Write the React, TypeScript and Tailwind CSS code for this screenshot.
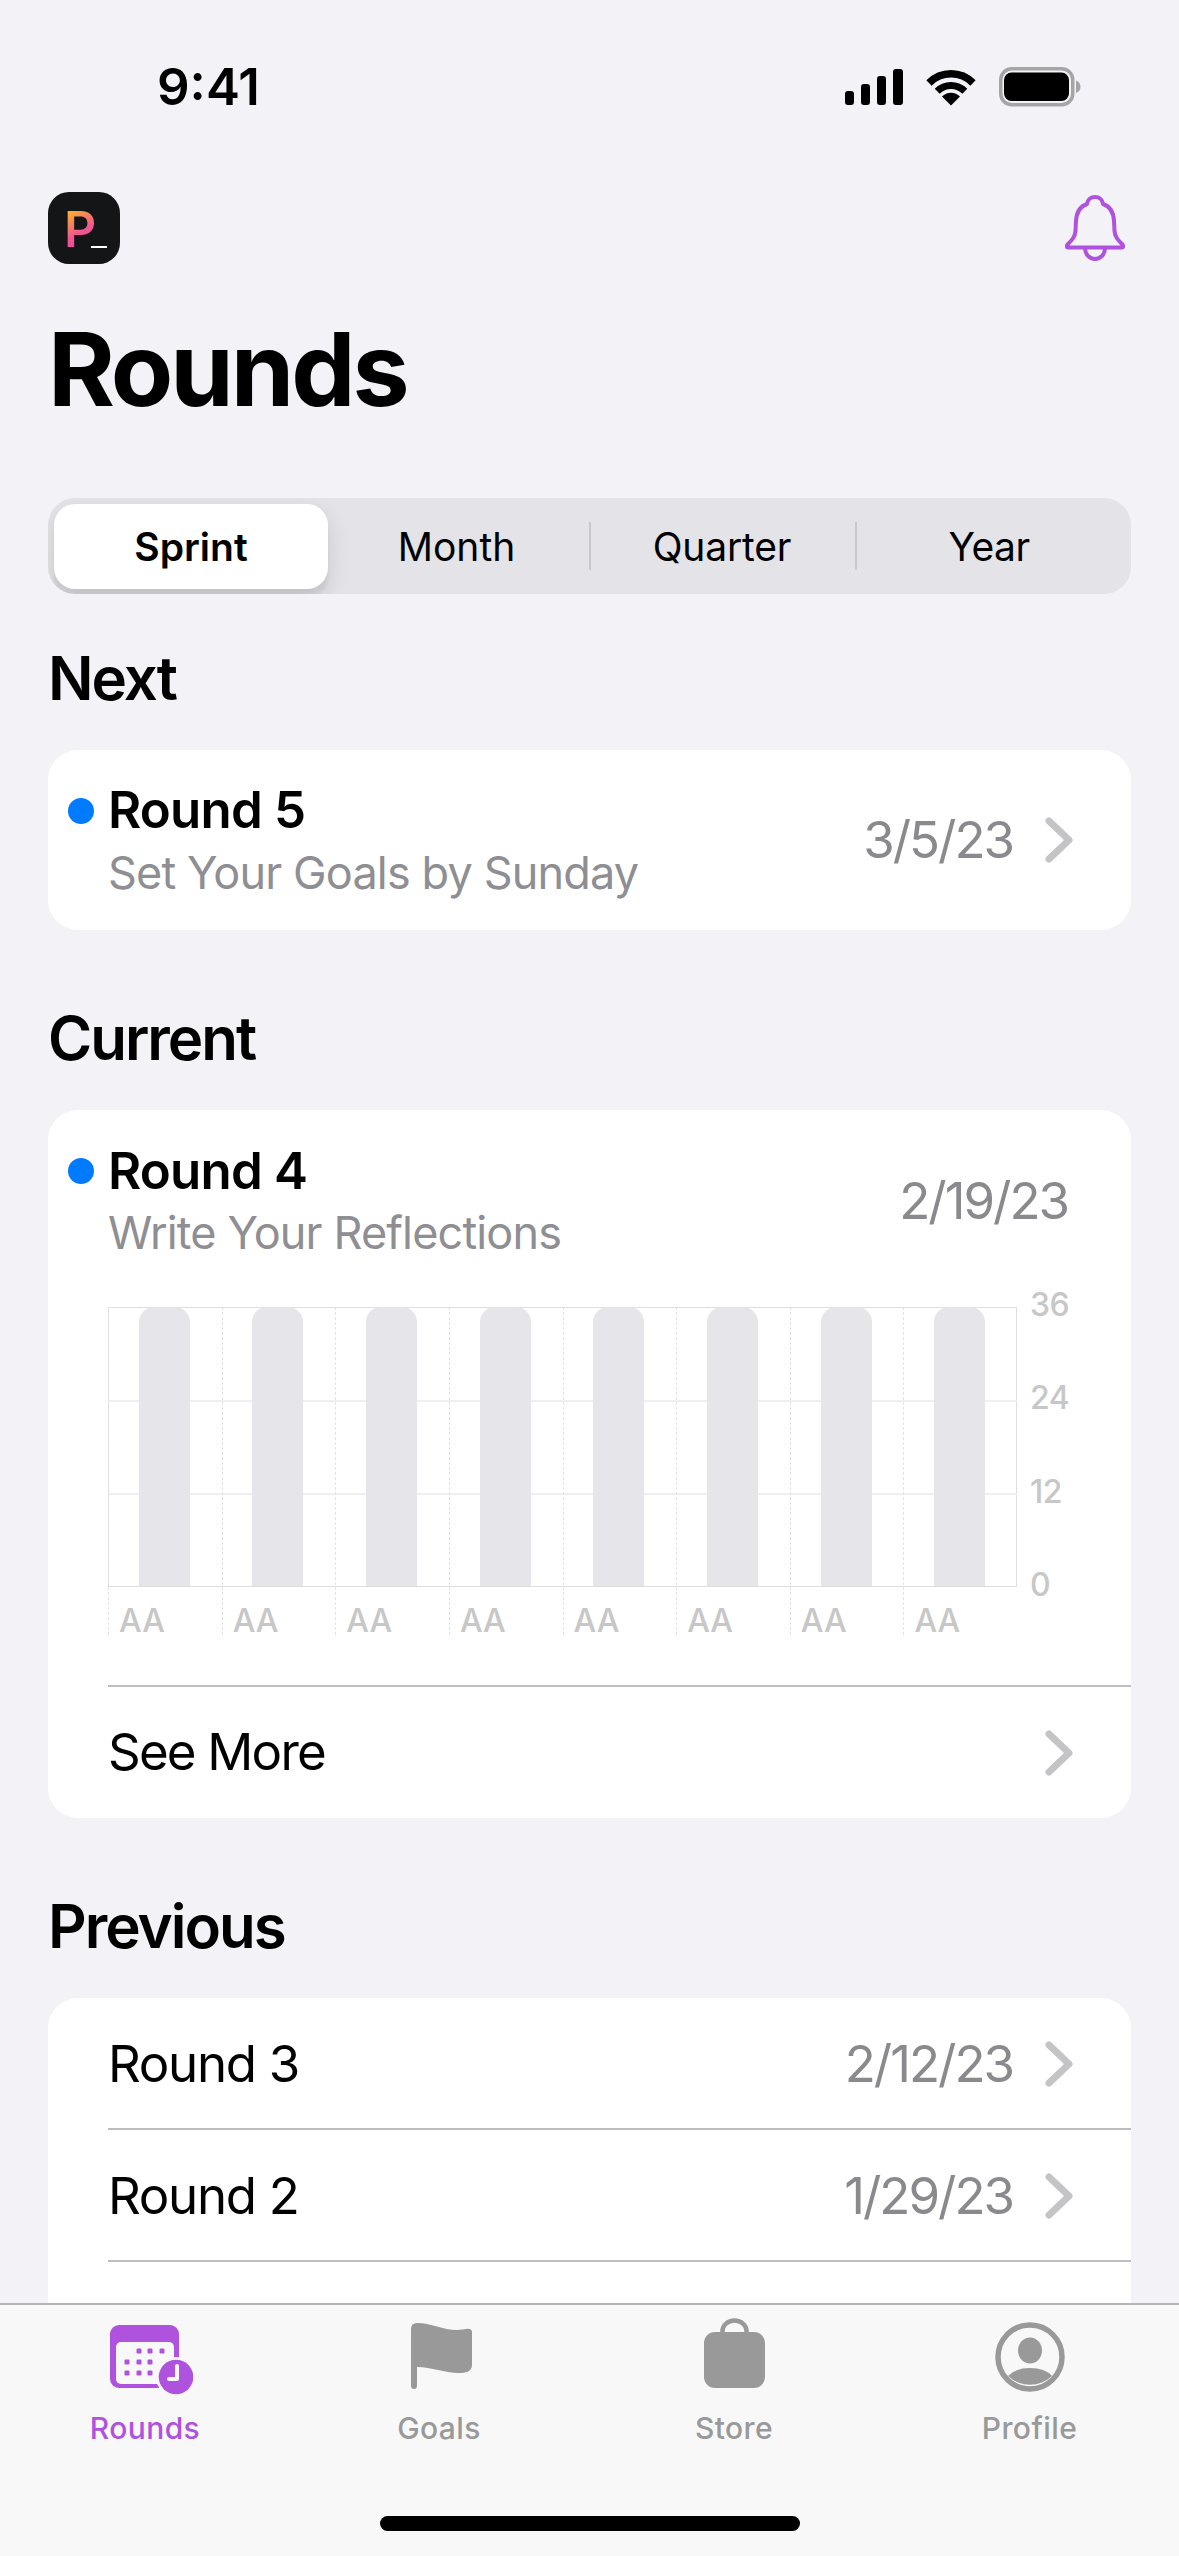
import React from "react";

const Chevron = () => (
  <svg width="28" height="46" viewBox="0 0 28 46" fill="none" className="shrink-0">
    <path d="M4 4 L24 23 L4 42" stroke="#c4c4c7" strokeWidth="7" strokeLinecap="round" strokeLinejoin="round" />
  </svg>
);

const Signal = () => (
  <svg width="58" height="36" viewBox="0 0 58 36" fill="#000">
    <rect x="0" y="22" width="9" height="14" rx="3" />
    <rect x="16" y="15" width="9" height="21" rx="3" />
    <rect x="32" y="7" width="9" height="29" rx="3" />
    <rect x="48" y="0" width="10" height="36" rx="3" />
  </svg>
);

const Wifi = () => (
  <svg width="52" height="38" viewBox="0 0 52 38" fill="none">
    <path d="M4 15 A31 31 0 0 1 48 15" stroke="#000" strokeWidth="7.5" />
    <path d="M12.2 23.2 A19.5 19.5 0 0 1 39.8 23.2" stroke="#000" strokeWidth="7" />
    <path d="M26 37.5 L17 28.5 A12.5 12.5 0 0 1 35 28.5 Z" fill="#000" />
  </svg>
);

const Battery = () => (
  <svg width="82" height="40" viewBox="0 0 82 40" fill="none">
    <rect x="1.75" y="1.75" width="72" height="36" rx="11" stroke="#a5a5a8" strokeWidth="3.5" />
    <rect x="5" y="5.5" width="65" height="28.5" rx="7.5" fill="#000" />
    <path d="M77 13.5 C80 14.5 81.5 17 81.5 19.75 C81.5 22.5 80 25 77 26 Z" fill="#a5a5a8" />
  </svg>
);

const Bell = () => (
  <svg width="60" height="66" viewBox="0 0 60 66" fill="none" stroke="#af52de" strokeWidth="4" strokeLinejoin="round" strokeLinecap="round">
    <path d="M3 52.5 H57 C58.5 52.5 58.5 50.5 57 49 C53 45 50 42 49.5 36 L49 26 C48.5 17 44 11 38 9 C37.5 4.5 34 2 30 2 C26 2 22.5 4.5 22 9 C16 11 11.5 17 11 26 L10.5 36 C10 42 7 45 3 49 C1.5 50.5 1.5 52.5 3 52.5 Z" />
    <path d="M20 53 C20 59.5 24.5 64 30 64 C35.5 64 40 59.5 40 53" />
  </svg>
);

const CalendarIcon = () => (
  <svg width="83" height="70" viewBox="0 0 83 70" className="ml-[12px]">
    <rect x="0" y="0" width="69" height="63" rx="9" fill="#af52de" />
    <rect x="6" y="17" width="58" height="42" rx="5" fill="#f8f8f8" />
    {[[29, 26], [40, 26], [52, 26], [17, 37], [29, 37], [40, 37], [17, 48], [29, 48], [40, 48]].map(([x, y]) => (
      <rect key={`${x}-${y}`} x={x - 2.5} y={y - 2.5} width="5" height="5" rx="1.2" fill="#af52de" />
    ))}
    <circle cx="66" cy="52" r="20" fill="#f8f8f8" />
    <circle cx="66" cy="52" r="17.3" fill="#af52de" />
    <path d="M67 41 V54 H59" stroke="#f8f8f8" strokeWidth="4" strokeLinecap="round" strokeLinejoin="round" fill="none" />
  </svg>
);

const FlagIcon = () => (
  <svg width="61" height="67" viewBox="0 0 61 67" fill="#999999" className="ml-[5px]">
    <path d="M0 6 Q0 0 6 0 C20 0 32 7 46 7 C52 7 61 3 61 9 V42 C61 49 54 50 48 50 C33 50 21 44 6 44 V63 A3 3 0 0 1 0 63 Z" />
  </svg>
);

const StoreIcon = () => (
  <svg width="61" height="70" viewBox="0 0 61 70" fill="none">
    <path d="M18.5 16 V13 A12 10.5 0 0 1 42.5 13 V16" stroke="#999999" strokeWidth="4.5" />
    <rect x="0" y="14" width="61" height="56" rx="11" fill="#999999" />
  </svg>
);

const ProfileIcon = () => (
  <svg width="70" height="70" viewBox="0 0 70 70" fill="none">
    <circle cx="35" cy="35" r="32" stroke="#999999" strokeWidth="5.5" />
    <ellipse cx="35" cy="28.5" rx="12" ry="13" fill="#999999" />
    <path d="M13 54 Q20 46 35 46 Q50 46 57 54 A32 32 0 0 1 13 54 Z" fill="#999999" />
  </svg>
);

const Heading = ({ children, className }: { children: React.ReactNode; className: string }) => (
  <h2 className={`h-[72px] leading-[72px] px-[48px] text-[60px] font-semibold tracking-[-2px] text-black ${className}`}>{children}</h2>
);

const RoundTitle = ({ title, sub }: { title: string; sub: string }) => (
  <div className="flex flex-col">
    <div className="flex items-center gap-[14px] h-[62px]">
      <span className="w-[26px] h-[26px] rounded-full bg-[#007aff]" />
      <span className="text-[51px] font-semibold tracking-[-0.8px] text-black">{title}</span>
    </div>
    <span className="h-[62px] leading-[62px] pl-[40px] text-[45px] tracking-[-0.85px] text-[#8e8e93]">{sub}</span>
  </div>
);

const DateText = ({ children }: { children: React.ReactNode }) => (
  <span className="text-[51px] tracking-[-2px] text-[#8a8a8e]">{children}</span>
);

const Sep = () => <div className="ml-[60px] h-[2px] bg-[#bdbdc0]" />;

const PrevRow = ({ title, date }: { title: string; date: string }) => (
  <div className="h-[130px] pt-[2px] flex items-center justify-between pl-[60px] pr-[58px]">
    <span className="text-[51px] tracking-[-1.3px] text-black">{title}</span>
    <div className="flex items-center gap-[32px]">
      <DateText>{date}</DateText>
      <Chevron />
    </div>
  </div>
);

const Tab = ({ icon, label, active, offset }: { icon: React.ReactNode; label: string; active?: boolean; offset: string }) => (
  <div className="flex flex-col items-center">
    <div className={`h-[90px] ${offset}`}>{icon}</div>
    <span className={`h-[40px] leading-[40px] text-[30px] font-medium tracking-[0.4px] ${active ? "text-[#af52de]" : "text-[#999999]"}`}>{label}</span>
  </div>
);

export default function App() {
  const cols = Array.from({ length: 8 });
  return (
    <div
      className="w-[1179px] h-[2556px] overflow-hidden flex flex-col bg-[#f2f2f7]"
      style={{ fontFamily: "Inter, 'Liberation Sans', sans-serif" }}
    >
      <div className="flex-1 min-h-0 flex flex-col">
        {/* Status bar */}
        <div className="h-[174px] shrink-0 flex items-center justify-between pl-[157px] pr-[98px]">
          <span className="text-[51px] font-semibold tracking-[0px] text-black">9:41</span>
          <div className="flex items-center gap-[22px]">
            <Signal />
            <Wifi />
            <Battery />
          </div>
        </div>

        {/* Header */}
        <div className="mt-[18px] h-[72px] shrink-0 flex items-center justify-between pl-[48px] pr-[54px]">
          <div className="w-[72px] h-[72px] rounded-[21px] bg-[#141517] flex items-end pl-[16px] pb-[10px]">
            <span className="text-[50px] leading-[50px] font-semibold bg-[linear-gradient(150deg,#fbb02d_15%,#f0568f_55%,#e23fc0_100%)] bg-clip-text text-transparent">P</span>
            <span className="w-[16px] h-[2px] mb-[6px] ml-[-5px] bg-white" />
          </div>
          <Bell />
        </div>

        {/* Title */}
        <h1 className="mt-[45px] h-[120px] leading-[120px] shrink-0 pl-[48px] text-[102px] font-bold tracking-[-3px] text-black">Rounds</h1>

        {/* Segmented control */}
        <div className="mt-[69px] mx-[48px] h-[96px] shrink-0 rounded-[27px] bg-[#e3e3e8] overflow-hidden grid grid-cols-[274px_261px_266px_266px] items-center px-[6px]">
          <div className="h-[85px] pt-[3px] rounded-[21px] bg-white shadow-[0_9px_24px_rgba(0,0,0,0.12),0_9px_3px_rgba(0,0,0,0.05)] flex items-center justify-center text-[39px] font-semibold text-black">Sprint</div>
          <div className="h-[48px] pt-[2px] pr-[4px] flex items-center justify-center text-[39px] text-black">Month</div>
          <div className="h-[48px] pt-[2px] pr-[2px] border-l-2 border-[#c7c7cc] flex items-center justify-center text-[39px] tracking-[-0.2px] text-black">Quarter</div>
          <div className="h-[48px] pt-[2px] border-l-2 border-[#c7c7cc] flex items-center justify-center text-[39px] tracking-[-0.5px] text-black">Year</div>
        </div>

        {/* Next */}
        <Heading className="mt-[48px] shrink-0">Next</Heading>
        <div className="mt-[36px] mx-[48px] h-[180px] shrink-0 rounded-[30px] bg-white flex items-center justify-between pl-[20px] pr-[58px]">
          <div className="pt-[3px]">
            <RoundTitle title="Round 5" sub="Set Your Goals by Sunday" />
          </div>
          <div className="flex items-center gap-[32px]">
            <DateText>3/5/23</DateText>
            <Chevron />
          </div>
        </div>

        {/* Current */}
        <Heading className="mt-[72px] shrink-0">Current</Heading>
        <div className="mt-[36px] mx-[48px] h-[708px] shrink-0 rounded-[30px] bg-white flex flex-col">
          <div className="pt-[30px] pl-[20px] pr-[63px] flex items-center justify-between">
            <RoundTitle title="Round 4" sub="Write Your Reflections" />
            <div className="pb-[2px]">
              <DateText>2/19/23</DateText>
            </div>
          </div>

          {/* Chart */}
          <div className="mt-[43px] ml-[60px] flex gap-[13px] h-[326px]">
            <div className="relative w-[909px] h-[326px]">
              <div className="absolute left-0 right-0 top-0 h-[280px] border-[1.5px] border-[#dedede]" />
              <div className="absolute left-0 right-0 top-[93px] h-[2px] bg-[#efeff0]" />
              <div className="absolute left-0 right-0 top-[186px] h-[2px] bg-[#efeff0]" />
              <div className="relative grid grid-cols-8 h-full">
                {cols.map((_, i) => (
                  <div key={i} className="flex flex-col h-full border-l-[1.5px] border-dashed border-[#e2e2e4]">
                    <div className="h-[279px] flex justify-center pr-[2px]">
                      <div className="w-[51px] h-full rounded-t-[15px] bg-[#e5e5ea]" />
                    </div>
                    <span className="mt-[21px] h-[28px] leading-[28px] pl-[10px] text-[32px] font-medium text-[#c7c7c7]">AA</span>
                  </div>
                ))}
              </div>
            </div>
            <div className="mt-[-14px] h-[304px] flex flex-col justify-between text-[32px] leading-[24px] font-medium tracking-[-0.5px] text-[#c7c7c7]">
              <span>36</span>
              <span>24</span>
              <span>12</span>
              <span>0</span>
            </div>
          </div>

          <div className="mt-[52px]">
            <Sep />
          </div>
          <div className="flex-1 flex items-center justify-between pl-[60px] pr-[58px]">
            <span className="text-[51px] tracking-[-1.8px] text-black">See More</span>
            <Chevron />
          </div>
        </div>

        {/* Previous */}
        <Heading className="mt-[72px] shrink-0">Previous</Heading>
        <div className="mt-[36px] mx-[48px] flex-1 rounded-t-[30px] bg-white flex flex-col">
          <PrevRow title="Round 3" date="2/12/23" />
          <Sep />
          <PrevRow title="Round 2" date="1/29/23" />
          <Sep />
        </div>
      </div>

      {/* Tab bar */}
      <div className="h-[253px] shrink-0 border-t-2 border-[#b5b5b5] bg-[#f8f8f8] flex flex-col">
        <div className="pt-[13px] grid grid-cols-[290px_298px_292px_299px]">
          <Tab icon={<CalendarIcon />} label="Rounds" active offset="pt-[7px]" />
          <Tab icon={<FlagIcon />} label="Goals" offset="pt-[5px]" />
          <Tab icon={<StoreIcon />} label="Store" offset="pt-0" />
          <Tab icon={<ProfileIcon />} label="Profile" offset="pt-[4px]" />
        </div>
        <div className="mt-[68px] mx-auto w-[420px] h-[15px] rounded-full bg-black" />
      </div>
    </div>
  );
}
